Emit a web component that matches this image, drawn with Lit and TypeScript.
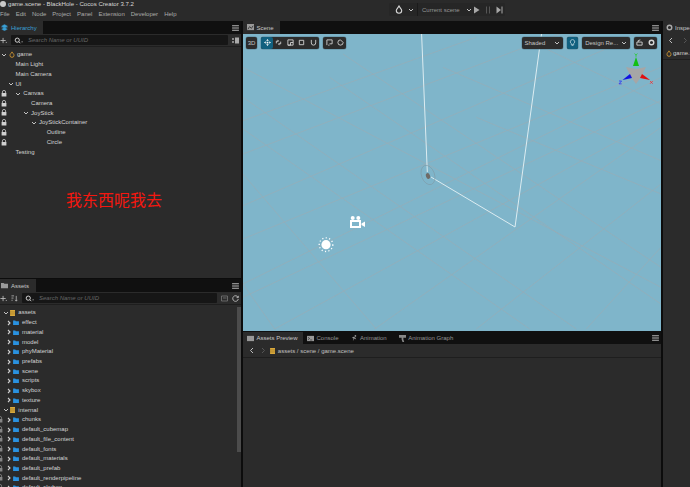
import { LitElement, html, css, svg } from "lit";
import { customElement } from "lit/decorators.js";

const chev = (open: boolean) => html`<svg class="chev" viewBox="0 0 6 6">${open
  ? svg`<path d="M1 2l2 2 2-2" fill="none" stroke="#c4c4c4" stroke-width="1"/>`
  : svg`<path d="M2 1l2 2-2 2" fill="none" stroke="#d0d0d0" stroke-width="1.1"/>`}</svg>`;
const lock = () => html`<svg class="lock" viewBox="0 0 6 7"><path d="M1.4 3V2a1.6 1.6 0 013.2 0v1" fill="none" stroke="#d0d0d0" stroke-width=".8"/><rect x=".6" y="3" width="4.8" height="3.6" rx=".4" fill="#d0d0d0"/></svg>`;
const drop = (c: string, s = 8) => html`<svg width="${s}" height="${s + 1}" viewBox="0 0 8 9"><path d="M4 1C3 3 1.3 4 1.3 5.6a2.7 2.7 0 005.4 0C6.7 4 5 3 4 1z" fill="none" stroke="${c}" stroke-width="1.1"/></svg>`;
const folder = html`<svg class="folder" viewBox="0 0 7 6"><path d="M0 .5h2.6l.7.9H7V6H0z" fill="#2a92e0"/></svg>`;
const db = html`<svg class="db" viewBox="0 0 6 7"><rect width="6" height="7" fill="#d9a93c"/><path d="M0 2.3h6M0 4.6h6" stroke="#8b6a1f" stroke-width=".6"/></svg>`;
const menu = html`<svg class="menu" viewBox="0 0 8 7"><path d="M0 .8h8M0 3.5h8M0 6.2h8" stroke="#b5b5b5" stroke-width="1.2"/></svg>`;
const search = html`<svg class="sico" viewBox="0 0 10 8"><circle cx="3.6" cy="3.6" r="2.4" fill="none" stroke="#d5d5d5" stroke-width="1.1"/><path d="M5.4 5.4l1.7 1.7M8.5 5.5h1.2" stroke="#d5d5d5" stroke-width="1"/></svg>`;
const plus = html`<svg class="ico" viewBox="0 0 8 8"><path d="M3.5 1v6M.5 4h6M6.6 6.2h1.2" stroke="#bcbcbc" stroke-width="1"/></svg>`;
const back = html`<svg width="5" height="7" viewBox="0 0 5 7"><path d="M4 1L1.5 3.5 4 6" fill="none" stroke="#c0c0c0"/></svg>`;
const fwd = html`<svg width="5" height="7" viewBox="0 0 5 7"><path d="M1 1l2.5 2.5L1 6" fill="none" stroke="#555"/></svg>`;
const gear = (c: string) => html`<svg viewBox="0 0 8 8"><circle cx="4" cy="4" r="2.6" fill="none" stroke="${c}" stroke-width="1.6"/></svg>`;

const hier: [string, number, boolean, boolean, boolean?][] = [
  ["game", 0, true, false, true], ["Main Light", 1, false, false], ["Main Camera", 1, false, false], ["UI", 1, true, false],
  ["Canvas", 2, true, true], ["Camera", 3, false, true], ["JoyStick", 3, true, true], ["JoyStickContainer", 4, true, true],
  ["Outline", 5, false, true], ["Circle", 5, false, true], ["Testing", 1, false, false],
];
const assets: [string, number, boolean][] = [
  ["assets", 0, false], ["effect", 1, false], ["material", 1, false], ["model", 1, false], ["phyMaterial", 1, false], ["prefabs", 1, false],
  ["scene", 1, false], ["scripts", 1, false], ["skybox", 1, false], ["texture", 1, false], ["internal", 0, false],
  ["chunks", 1, true], ["default_cubemap", 1, true], ["default_file_content", 1, true], ["default_fonts", 1, true],
  ["default_materials", 1, true], ["default_prefab", 1, true], ["default_renderpipeline", 1, true], ["default_skybox", 1, true],
];
const gridLines = [
  [0, 260, 700, 10], [0, 360, 950, 0], [0, 515, 1100, 40], [0, 615, 1254, 100], [0, 750, 1254, 130], [0, 790, 1254, 200],
  [95, 885, 1254, 250], [395, 885, 1254, 280], [700, 885, 1254, 450], [1030, 885, 1254, 640],
  [0, 100, 1254, 760], [0, 190, 1000, 885], [0, 285, 860, 885], [0, 420, 400, 885], [0, 750, 95, 885],
  [260, 130, 1254, 810], [300, 60, 1254, 700], [600, 100, 1254, 380], [700, 250, 1254, 480], [900, 40, 1254, 210],
];

@customElement("app-root")
export class AppRoot extends LitElement {
  static styles = css`
    :host { display: block; width: 690px; height: 487px; overflow: hidden; background: #0c0c0c; font: 6px "Liberation Sans", sans-serif; color: #d4d4d4; }
    svg { display: block; flex: none; }
    .top { height: 21px; background: #2a2a2a; display: flex; }
    .tl { width: 389px; flex: none; display: flex; flex-direction: column; }
    .title { height: 7px; display: flex; align-items: center; gap: 2px; color: #d8d8d8; font-size: 6.1px; line-height: 7px; white-space: nowrap; }
    .title i { width: 6px; height: 6px; border-radius: 50%; background: #c8c8c8; display: block; }
    .menus { display: flex; gap: 6px; margin-top: 3.5px; color: #ababab; }
    .play { display: flex; align-items: center; height: 13px; margin-top: 3px; }
    .pg { display: flex; align-items: center; height: 13px; background: #262626; color: #959595; white-space: nowrap; box-sizing: border-box; }
    .dropb { width: 28px; gap: 5px; padding-left: 6px; border-radius: 2px 0 0 2px; }
    .cur { width: 54px; gap: 6px; padding-left: 4px; border-left: 1px solid #1b1b1b; }
    .pbtn { gap: 5px; padding: 0 2px; border-radius: 0 2px 2px 0; }
    .main { display: grid; grid-template-columns: 241px 418px 27px; column-gap: 2px; height: 466px; }
    .col { display: flex; flex-direction: column; min-height: 0; overflow: hidden; }
    .panel { background: #2b2b2b; display: flex; flex-direction: column; min-height: 0; overflow: hidden; }
    .tabs { height: 13px; background: #101010; display: flex; align-items: stretch; flex: none; position: relative; }
    .tab { display: flex; align-items: center; gap: 2.5px; padding: 0 8px 0 4px; color: #959595; white-space: nowrap; box-sizing: border-box; }
    .tab.on { background: #2b2b2b; color: #c8c8c8; }
    .tab svg { width: 7px; height: 7px; }
    .side { padding: 0 0 0 1px; gap: 3px; }
    .insp { padding: 0 0 0 3px; gap: 2px; }
    .blue { color: #3aa0d5 !important; width: 43px; }
    .w36 { width: 36px; }
    .w37 { width: 37px; }
    .w60 { width: 60px; }
    .menu { width: 7px; height: 6px; position: absolute; right: 2px; top: 4px; }
    .bar { height: 13px; display: flex; align-items: center; gap: 4px; padding: 0 2px 0 0; flex: none; border-bottom: 1px solid #1e1e1e; box-sizing: border-box; }
    .ico { width: 7px; height: 7px; }
    .sico { width: 9px; height: 7px; }
    .input { flex: 1; height: 10px; background: #161616; border-radius: 1px; display: flex; align-items: center; gap: 5px; padding-left: 3px; color: #666; font-style: italic; }
    .tree { padding-top: 3.1px; position: relative; flex: 1; }
    .hier { height: 257px; flex: none; }
    .asset-panel { flex: 1; margin-top: 1px; }
    .row { height: 9.72px; display: flex; align-items: center; line-height: 9px; position: relative; white-space: nowrap; }
    .lock { width: 6px; height: 7px; position: absolute; left: 1.4px; top: 1px; }
    .chev { width: 6px; height: 6px; }
    .sp { width: 6px; flex: none; }
    .folder { width: 6px; height: 5px; margin: 0 2.7px 0 1.3px; }
    .db { width: 5.3px; height: 6px; margin: 0 3px 0 1.5px; }
    .node { margin-left: 2px; }
    .red { position: absolute; left: 66px; top: 143px; font: 16px/18px "Noto Sans CJK SC", sans-serif; color: #f4170f; }
    .scroll { position: absolute; right: .5px; top: 2px; width: 3.5px; height: 145px; background: #4c4c4c; }
    .assetrow .lock { opacity: .55; left: -3px; }
    .child { padding-left: 6px; }
    .root { padding-left: 2.5px; }
    .scene { position: relative; height: 297px; background: #7fb5ca; overflow: hidden; }
    .scene > svg { position: absolute; inset: 0; }
    .tools { position: absolute; left: 2.7px; right: 3.7px; top: 3.3px; display: flex; justify-content: space-between; }
    .tg { display: flex; gap: 4px; align-items: center; }
    .tb { height: 11.4px; background: #2c2c2c; border-radius: 2px; display: flex; align-items: center; color: #c4c4c4; box-shadow: 0 0 0 .5px #5f8a9b; white-space: nowrap; }
    .tb span { width: 11.6px; height: 11.4px; display: flex; align-items: center; justify-content: center; border-radius: 2px; }
    .tb svg { width: 7px; height: 7px; }
    .tb .chev { width: 6px; height: 6px; }
    .tb .act { background: #11607f; }
    .sel { justify-content: space-between; padding: 0 3px 0 3px; box-sizing: border-box; }
    .w41 { width: 41px; }
    .w48 { width: 48px; }
    .bottom { flex: 1; }
    .btabs { padding-top: 1px; box-sizing: border-box; }
    .crumbs { gap: 0; padding-left: 5.5px; color: #c0c0c0; height: 14px; }
    .crumbs .fw { margin-left: 7px; }
    .path { margin-left: 2.5px; display: flex; align-items: center; }
    .grow { flex: 1; }
    .nav { height: 13px; display: flex; align-items: center; gap: 10px; padding-left: 5px; }
    .gamef { height: 13px; display: flex; align-items: center; gap: 1px; padding-left: 3px; white-space: nowrap; border-bottom: 1px solid #1e1e1e; box-sizing: border-box; }
  `;

  private grid() {
    return html`<svg width="418" height="297" viewBox="243 34 418 297">
      <g transform="translate(243 34) scale(.3333)">
        ${gridLines.map(l => svg`<line x1="${l[0]}" y1="${l[1]}" x2="${l[2]}" y2="${l[3]}" stroke="#98acb5" stroke-width="2"/>`)}
      </g>
      <path d="M421.6 34L427.3 172M431 177L515 227L541.5 34" fill="none" stroke="#dcecf1" stroke-width="1"/>
      <ellipse cx="428" cy="175" rx="6.5" ry="10" transform="rotate(-20 428 175)" fill="none" stroke="#7f9aa6" stroke-width=".6"/>
      <ellipse cx="428" cy="176" rx="2" ry="3" transform="rotate(-20 428 176)" fill="#6f6a66"/>
      <g fill="#fff"><circle cx="352.7" cy="218" r="2"/><circle cx="358.3" cy="218" r="2"/>
        <path fill-rule="evenodd" d="M350 220h11v8h-11zM352 222v4h7v-4z"/><path d="M361.5 223.5l3.5-2v5.5l-3.5-2z"/></g>
      <g fill="#fff"><circle cx="326" cy="244.7" r="4.6"/>
        <circle cx="326" cy="244.7" r="6.8" fill="none" stroke="#fff" stroke-width="1.3" stroke-dasharray="1.2 2.3"/></g>
      <g>
        <path d="M626 67l10 2 10-2-5 10-5 7-5-7z" fill="#a6a6a6"/>
        <path d="M636 57l3 9h-6z" fill="#12c012"/>
        <path d="M622.5 80l7.5-6 2 4z" fill="#1010e0"/><path d="M650 80l-8-6-2 4z" fill="#e01010"/>
        <path d="M634.6 53.5l1.4 1.7 1.4-1.7M636 55.2v1.6" fill="none" stroke="#18d018" stroke-width=".7"/>
        <path d="M619 81h2.6l-2.6 2.8h2.6" fill="none" stroke="#2020ff" stroke-width=".7"/>
        <path d="M650 81l2.8 2.8M652.8 81L650 83.8" fill="none" stroke="#ff2020" stroke-width=".7"/>
      </g>
    </svg>`;
  }

  private s(d: string) { return html`<span><svg viewBox="0 0 8 8"><path d="${d}" fill="none" stroke="#d6d6d6" stroke-width="1"/></svg></span>`; }

  render() {
    return html`
      <div class="top">
        <div class="tl">
          <div class="title"><i></i><span>game.scene - BlackHole - Cocos Creator 3.7.2</span></div>
          <div class="menus">${["File","Edit","Node","Project","Panel","Extension","Developer","Help"].map(m => html`<span>${m}</span>`)}</div>
        </div>
        <div class="play">
          <div class="pg dropb">${drop("#d5d5d5")}${chev(true)}</div>
          <div class="pg cur"><span>Current scene</span>${chev(true)}</div>
          <div class="pg pbtn">
            <svg width="7" height="8" viewBox="0 0 7 8"><path d="M1 .5l5.5 3.5L1 7.5z" fill="#a8a8a8"/></svg>
            <svg width="6" height="8" viewBox="0 0 6 8"><path d="M1.5 .5v7M4.5 .5v7" stroke="#555" stroke-width="1"/></svg>
            <svg width="7" height="8" viewBox="0 0 7 8"><path d="M.5 .5l4.5 3.5-4.5 3.5z" fill="#a8a8a8"/><path d="M6 .5v7" stroke="#a8a8a8"/></svg>
          </div>
        </div>
      </div>
      <div class="main">
        <div class="col">
          <section class="panel hier">
            <div class="tabs"><div class="tab on blue side"><svg viewBox="0 0 8 8"><path d="M4 .5L7.5 2.5 4 4.5.5 2.5zM.5 4.2L4 6.2 7.5 4.2M.5 5.8L4 7.8 7.5 5.8" fill="#3aa0d5" stroke="#3aa0d5" stroke-width=".4"/></svg>Hierarchy</div>${menu}</div>
            <div class="bar">${plus}<div class="input">${search}<span>Search Name or UUID</span></div><svg class="ico" viewBox="0 0 7 7"><path d="M0 1h2v2H0zM0 4h2v2H0z" fill="#888"/><path d="M3 .5h4v6H3z" fill="#aaa"/></svg></div>
            <div class="tree">
              ${hier.map(([n, d, open, lk, root]) => html`<div class="row" style="padding-left:${d === 0 ? 1 : 7.5 + (d - 1) * 7.8}px">
                ${lk ? lock() : ""}${open ? chev(true) : html`<i class="sp"></i>`}${root ? html`<span class="node">${drop("#e0a030", 6)}</span>` : ""}<span class="node">${n}</span></div>`)}
              <div class="red">我东西呢我去</div>
            </div>
          </section>
          <section class="panel asset-panel">
            <div class="tabs"><div class="tab on w36 side"><svg viewBox="0 0 8 8"><path d="M0 1h3l1 1h4v5H0z" fill="#9a9a9a"/></svg>Assets</div>${menu}</div>
            <div class="bar">${plus}<svg class="ico" viewBox="0 0 8 8"><path d="M.5 1h3M.5 3.5h2.4M.5 6h1.4M6 1v6M4.8 5.6L6 7l1.2-1.4" stroke="#bcbcbc" fill="none" stroke-width=".9"/></svg>
              <div class="input">${search}<span>Search Name or UUID</span></div>
              <svg class="ico" viewBox="0 0 7 7"><path d="M.5 1h6v5h-6zM2 3h3.5" fill="none" stroke="#777" stroke-width=".8"/></svg>
              <svg class="ico" viewBox="0 0 7 7"><path d="M6 2.2A2.8 2.8 0 106.3 4M6.3.8v1.8H4.6" fill="none" stroke="#bcbcbc" stroke-width=".9"/></svg>
            </div>
            <div class="tree">
              ${assets.map(([n, d, lk]) => d
                ? html`<div class="row assetrow child">${lk ? lock() : ""}${chev(false)}${folder}<span>${n}</span></div>`
                : html`<div class="row assetrow root">${chev(true)}${db}<span>${n}</span></div>`)}
              <div class="scroll"></div>
            </div>
          </section>
        </div>
        <div class="col">
          <div class="tabs"><div class="tab on w37"><svg viewBox="0 0 8 8"><rect width="8" height="7" fill="#9a9a9a"/><path d="M1 6l2-3 2 2 2-3" stroke="#333" fill="none"/></svg>Scene</div>${menu}</div>
          <div class="scene">
            ${this.grid()}
            <div class="tools">
              <div class="tg">
                <div class="tb"><span>3D</span></div>
                <div class="tb">
                  <span class="act"><svg viewBox="0 0 8 8"><path d="M4 0l1.5 2h-3zM4 8l1.5-2h-3zM0 4l2-1.5v3zM8 4L6 2.5v3zM3 3h2v2H3z" fill="#fff"/></svg></span>
                  ${this.s("M1.5 5V2.5h2M6.5 3v2.5h-2M3 1l1 1.5L3 3M5 7L4 5.5 5 5")}
                  ${this.s("M1 7V1h6v6zM1 7h3V4h3")}
                  ${this.s("M1.5 1.5h5v5h-5z")}
                  ${this.s("M1.5 1v3.5a2.5 2.5 0 005 0V1")}
                </div>
                <div class="tb">
                  ${this.s("M1 1h6v4.5H4M1 1v6M2.5 7h1.5")}
                  ${this.s("M4 1a3 3 0 103 3L4 1M3 3.5h.1M5 5h.1")}
                </div>
              </div>
              <div class="tg">
                <div class="tb sel w41">Shaded ${chev(true)}</div>
                <div class="tb"><span class="act"><svg viewBox="0 0 8 8"><path d="M2.6 5.2a2.5 2.5 0 112.8 0V6.5H2.6zM3 7.6h2" fill="none" stroke="#cfe3ea" stroke-width=".8"/></svg></span></div>
                <div class="tb sel w48">Design Re... ${chev(true)}</div>
                <div class="tb">
                  ${this.s("M1 7V3.5h6V7zM2.5 3.5V1.8L5 1")}
                  <span>${gear("#d6d6d6")}</span>
                </div>
              </div>
            </div>
          </div>
          <section class="panel bottom">
            <div class="tabs btabs">
              <div class="tab on w60"><svg viewBox="0 0 8 8"><rect y="1" width="8" height="6" fill="#999"/></svg>Assets Preview</div>
              <div class="tab"><svg viewBox="0 0 8 8"><rect y="1" width="8" height="6" fill="#999"/><path d="M1 2.5L3 4 1 5.5M3.5 5.7h2.5" stroke="#222" fill="none" stroke-width=".7"/></svg>Console</div>
              <div class="tab"><svg viewBox="0 0 8 8"><path d="M3 2l2 1 1 2-2-1-2 3 1-3L1 3z" fill="#999"/><circle cx="5" cy="1" r="1" fill="#999"/></svg>Animation</div>
              <div class="tab"><svg viewBox="0 0 8 8"><path d="M0 0h8v3H5v2l1 3H4L3 5V3H0z" fill="#888"/></svg>Animation Graph</div>
              ${menu}
            </div>
            <div class="bar crumbs">
              ${back}
              <span class="fw">${fwd}</span>
              <span class="path">${db}<span>assets / scene / game.scene</span></span>
            </div>
          </section>
        </div>
        <div class="col">
          <section class="panel grow">
            <div class="tabs"><div class="tab on insp">${gear("#aaa")}Inspector</div></div>
            <div class="nav">${back}${fwd}</div>
            <div class="gamef">${drop("#e0a030", 6)}<span>game.scene</span></div>
          </section>
        </div>
      </div>
    `;
  }
}
